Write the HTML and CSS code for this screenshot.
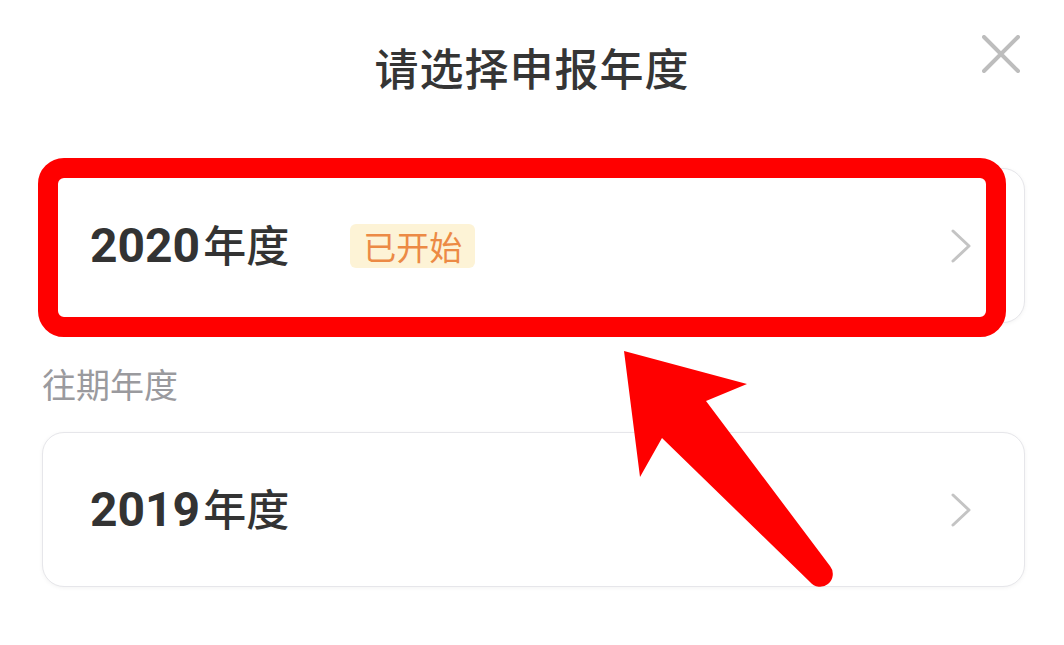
FILE: index.html
```html
<!DOCTYPE html>
<html lang="zh-CN">
<head>
<meta charset="utf-8">
<title>请选择申报年度</title>
<link rel="stylesheet" href="styles.css">
</head>
<body>
<div class="page">
  <header class="header">
    <div></div>
    <h1 class="title">请选择申报年度</h1>
    <div class="close-wrap">
      <svg class="close" width="38" height="38" viewBox="0 0 38 38" aria-label="关闭">
        <path d="M2 2 L36 36 M36 2 L2 36" stroke="#bdbdbd" stroke-width="4" stroke-linecap="round" fill="none"/>
      </svg>
    </div>
  </header>

  <main class="list">
    <div class="card">
      <span class="year"><span class="num">2020</span>年度</span>
      <span class="badge">已开始</span>
      <svg class="chevron" width="22" height="36" viewBox="0 0 22 36">
        <path d="M3 3 L19 18 L3 33" stroke="#c4c4c4" stroke-width="3" stroke-linecap="round" stroke-linejoin="round" fill="none"/>
      </svg>
    </div>

    <div class="label">往期年度</div>

    <div class="card">
      <span class="year"><span class="num">2019</span>年度</span>
      <svg class="chevron" width="22" height="36" viewBox="0 0 22 36">
        <path d="M3 3 L19 18 L3 33" stroke="#c4c4c4" stroke-width="3" stroke-linecap="round" stroke-linejoin="round" fill="none"/>
      </svg>
    </div>
  </main>

  <div class="highlight"></div>
  <svg class="arrow" width="1064" height="645" viewBox="0 0 1064 645">
    <path d="M624 351 L747 384 L706 401 L830 566 A12 12 0 0 1 810 582 L662 438 L640 477 Z" fill="#ff0000"/>
  </svg>
</div>
</body>
</html>
```

FILE: styles.css
```css
* { box-sizing: border-box; }
html, body { margin: 0; padding: 0; background: #ffffff; }
body {
  font-family: "Noto Sans CJK SC", "Noto Sans", sans-serif;
  color: #333333;
}
.page {
  position: relative;
  width: 1064px;
  height: 645px;
  overflow: hidden;
}
.header {
  display: grid;
  grid-template-columns: 1fr auto 1fr;
  height: 134px;
  align-items: center;
}
.title {
  margin: 0;
  font-size: 44px;
  line-height: 44px;
  font-weight: 500;
  color: #353535;
  letter-spacing: 1px;
}
.close-wrap {
  justify-self: end;
  align-self: start;
  margin-top: 35px;
  margin-right: 44px;
  display: flex;
}
.list {
  padding: 34px 39px 0 42px;
  display: flex;
  flex-direction: column;
}
.card {
  height: 155px;
  border: 1.5px solid #e6e6ea;
  border-radius: 22px;
  box-shadow: 0 1px 4px rgba(0, 0, 0, 0.05);
  background: #fff;
  display: flex;
  align-items: center;
  padding: 0 52px 0 47px;
}
.year {
  font-size: 43px;
  font-weight: 500;
  color: #333333;
  line-height: 1;
}
.num {
  font-family: Roboto, "Noto Sans", sans-serif;
  font-size: 48px;
  font-weight: 700;
  margin-right: 3px;
}
.badge {
  margin-left: 61px;
  background: #fdf3d6;
  color: #ec8a45;
  font-size: 33px;
  line-height: 44px;
  height: 44px;
  padding: 0 13px;
  border-radius: 6px;
}
.chevron { margin-left: auto; }
.label {
  margin: 44px 0 31px 0;
  font-size: 34px;
  line-height: 34px;
  color: #9a9a9e;
}
.highlight {
  position: absolute;
  left: 38px;
  top: 158px;
  width: 968px;
  height: 179px;
  border: 20px solid #ff0000;
  border-radius: 26px;
}
.arrow {
  position: absolute;
  left: 0;
  top: 0;
}
```
